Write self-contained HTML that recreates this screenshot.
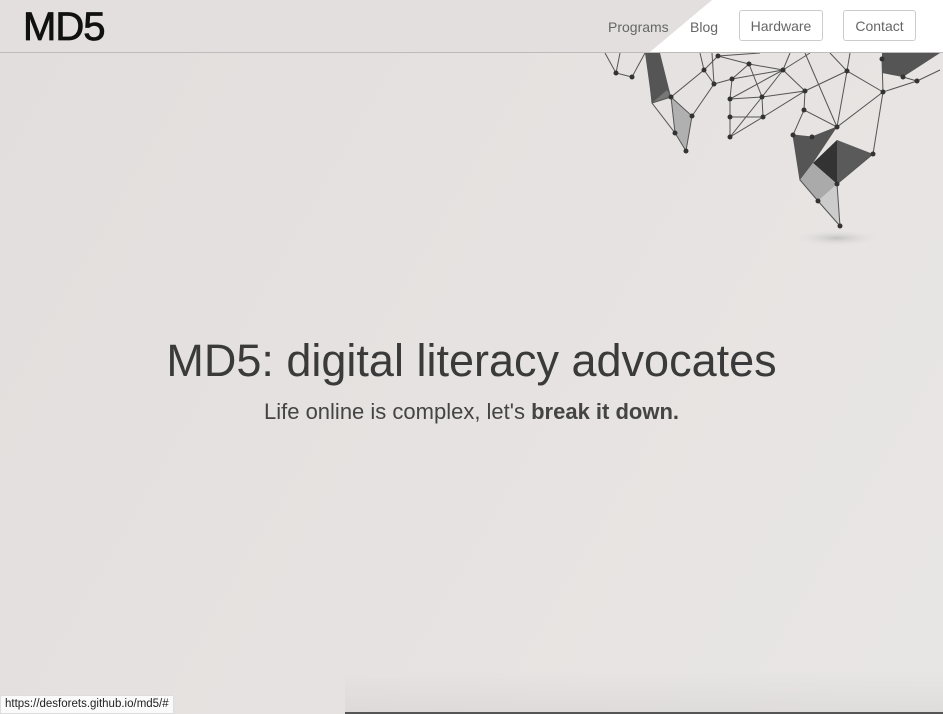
<!DOCTYPE html>
<html><head><meta charset="utf-8"><style>
html,body{margin:0;padding:0;}
body{width:943px;height:714px;overflow:hidden;position:relative;background:linear-gradient(120deg,#e2dedd 0%,#e6e2e1 50%,#e8e6e5 100%);font-family:"Liberation Sans",sans-serif;}
.nav{position:absolute;left:0;top:0;width:943px;height:52px;border-bottom:1px solid #bdbaba;background:#e3dfde;}
.navw{position:absolute;left:0;top:0;width:943px;height:52px;background:#fff;clip-path:polygon(712px 0,943px 0,943px 52px,650px 52px);}
.logo{position:absolute;left:23px;top:5px;font-size:40px;font-weight:normal;color:#111;letter-spacing:-1px;-webkit-text-stroke:0.8px #111;}
.lk{position:absolute;top:19px;font-size:14px;color:#666;}
.btn{position:absolute;top:10px;height:31px;border:1px solid #ccc;border-radius:3px;box-sizing:border-box;font-size:14px;color:#666;line-height:31px;text-align:center;background:#fff;}
h1{position:absolute;left:0;width:943px;top:335px;margin:0;text-align:center;font-weight:normal;font-size:45px;color:#3a3a3a;}
.sub{position:absolute;left:0;width:943px;top:399px;text-align:center;font-size:22px;color:#444;}
.status{position:absolute;left:0;top:695px;height:17px;padding:0 4px;background:#fafafa;border:1px solid #ddd;font-size:11.5px;line-height:17px;color:#222;}
.bot{position:absolute;left:345px;top:712px;width:598px;height:2px;background:#555;}
.botsh{position:absolute;left:345px;top:670px;width:598px;height:42px;background:linear-gradient(rgba(0,0,0,0),rgba(0,0,0,0.04));}
</style></head><body>
<svg width="943" height="714" style="position:absolute;left:0;top:0">
<defs><radialGradient id="sh"><stop offset="0" stop-color="#c4c2c2"/><stop offset="1" stop-color="#e4e1e0" stop-opacity="0"/></radialGradient></defs>
<ellipse cx="837" cy="238" rx="42" ry="8" fill="url(#sh)"/>
<g fill="#555"><polygon points="645,53 660,53 671,97 652,103"/><polygon points="793,135 812,137 837,127 813,163 800,180"/><polygon points="882,53 940,53 903,77 882,73"/></g>
<polygon points="813,163 837,140 837,184" fill="#333"/>
<polygon points="837,140 873,154 837,184" fill="#5a5a5a"/>
<polygon points="813,163 837,184 818,201 800,180" fill="#aaa"/>
<polygon points="818,201 837,184 840,226" fill="#ccc"/>
<polygon points="671,97 692,116 686,151 675,133" fill="#b0b0b0"/>
<polygon points="652,103 671,97 667,90" fill="#777"/>
<g stroke="#555" stroke-width="1" fill="none">
<polyline points="605,53 616,73 632,77 645,53"/>
<polyline points="620,53 616,73"/>
<polyline points="652,103 671,97 704,70 718,56"/>
<polyline points="671,97 675,133 686,151 692,116 671,97"/>
<polyline points="692,116 714,84 704,70 700,53"/>
<polyline points="714,84 732,79 749,64 718,56 760,53"/>
<polyline points="714,84 712,53"/>
<polyline points="732,79 730,99 730,117 730,137 762,97 783,70 730,99"/>
<polyline points="730,99 762,97 805,91 783,70 749,64"/>
<polyline points="730,117 763,117 805,91 847,71 883,92 917,81 940,70"/>
<polyline points="730,137 763,117 762,97 749,64"/>
<polyline points="732,79 783,70 790,53"/>
<polyline points="805,91 804,110 837,127 847,71 830,53"/>
<polyline points="804,110 793,135 812,137 837,127 883,92 873,154"/>
<polyline points="837,127 805,53"/>
<polyline points="847,71 850,53"/>
<polyline points="883,92 882,59 903,77 917,81"/>
<polyline points="793,135 800,180 818,201 840,226 837,184 873,154"/>
<polyline points="783,70 810,53"/>
<polyline points="647,53 652,103 675,133"/>
</g>
<g fill="#333">
<circle cx="616" cy="73" r="2.5"/><circle cx="632" cy="77" r="2.5"/><circle cx="671" cy="97" r="2.5"/><circle cx="692" cy="116" r="2.5"/><circle cx="675" cy="133" r="2.5"/><circle cx="686" cy="151" r="2.5"/><circle cx="704" cy="70" r="2.5"/><circle cx="714" cy="84" r="2.5"/><circle cx="718" cy="56" r="2.5"/><circle cx="749" cy="64" r="2.5"/><circle cx="732" cy="79" r="2.5"/><circle cx="730" cy="99" r="2.5"/><circle cx="762" cy="97" r="2.5"/><circle cx="783" cy="70" r="2.5"/><circle cx="805" cy="91" r="2.5"/><circle cx="730" cy="117" r="2.5"/><circle cx="763" cy="117" r="2.5"/><circle cx="730" cy="137" r="2.5"/><circle cx="804" cy="110" r="2.5"/><circle cx="837" cy="127" r="2.5"/><circle cx="847" cy="71" r="2.5"/><circle cx="883" cy="92" r="2.5"/><circle cx="917" cy="81" r="2.5"/><circle cx="903" cy="77" r="2.5"/><circle cx="882" cy="59" r="2.5"/><circle cx="793" cy="135" r="2.5"/><circle cx="812" cy="137" r="2.5"/><circle cx="873" cy="154" r="2.5"/><circle cx="837" cy="184" r="2.5"/><circle cx="818" cy="201" r="2.5"/><circle cx="840" cy="226" r="2.5"/>
</g>
</svg>
<div class="nav"><div class="navw"></div>
<div class="logo">MD5</div>
<div class="lk" style="left:608px">Programs</div>
<div class="lk" style="left:690px">Blog</div>
<div class="btn" style="left:739px;width:84px">Hardware</div>
<div class="btn" style="left:843px;width:73px">Contact</div>
</div>
<h1>MD5: digital literacy advocates</h1>
<div class="sub">Life online is complex, let's <b>break it down.</b></div>
<div class="botsh"></div>
<div class="bot"></div>
<div class="status">https://desforets.github.io/md5/#</div>
</body></html>
